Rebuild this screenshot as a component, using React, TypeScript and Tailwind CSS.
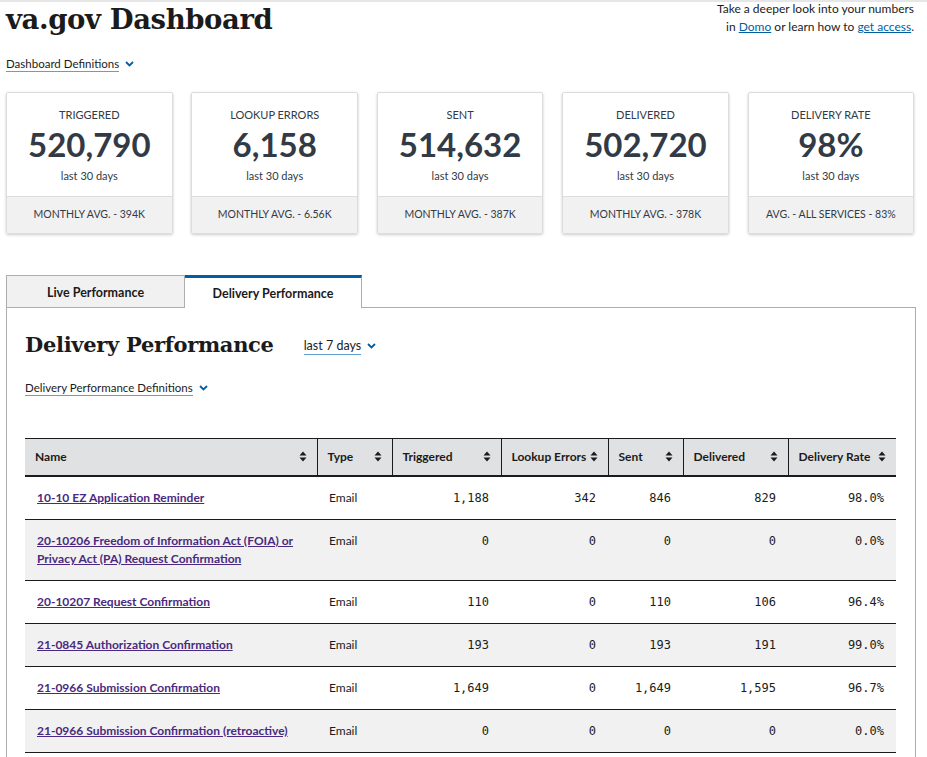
import React from "react";

interface Stat {
  label: string;
  value: string;
  footer: string;
}

interface Row {
  name: string;
  type: string;
  triggered: string;
  lookup: string;
  sent: string;
  delivered: string;
  rate: string;
}

const stats: Stat[] = [
  { label: "Triggered", value: "520,790", footer: "Monthly avg. - 394K" },
  { label: "Lookup errors", value: "6,158", footer: "Monthly avg. - 6.56K" },
  { label: "Sent", value: "514,632", footer: "Monthly avg. - 387K" },
  { label: "Delivered", value: "502,720", footer: "Monthly avg. - 378K" },
  { label: "Delivery rate", value: "98%", footer: "Avg. - all services - 83%" },
];

const rows: Row[] = [
  { name: "10-10 EZ Application Reminder", type: "Email", triggered: "1,188", lookup: "342", sent: "846", delivered: "829", rate: "98.0%" },
  { name: "20-10206 Freedom of Information Act (FOIA) or Privacy Act (PA) Request Confirmation", type: "Email", triggered: "0", lookup: "0", sent: "0", delivered: "0", rate: "0.0%" },
  { name: "20-10207 Request Confirmation", type: "Email", triggered: "110", lookup: "0", sent: "110", delivered: "106", rate: "96.4%" },
  { name: "21-0845 Authorization Confirmation", type: "Email", triggered: "193", lookup: "0", sent: "193", delivered: "191", rate: "99.0%" },
  { name: "21-0966 Submission Confirmation", type: "Email", triggered: "1,649", lookup: "0", sent: "1,649", delivered: "1,595", rate: "96.7%" },
  { name: "21-0966 Submission Confirmation (retroactive)", type: "Email", triggered: "0", lookup: "0", sent: "0", delivered: "0", rate: "0.0%" },
];

const columns = [
  { label: "Name", width: "w-[292px]" },
  { label: "Type", width: "w-[75px]" },
  { label: "Triggered", width: "w-[109px]" },
  { label: "Lookup Errors", width: "w-[107px]" },
  { label: "Sent", width: "w-[75px]" },
  { label: "Delivered", width: "w-[105px]" },
  { label: "Delivery Rate", width: "w-[108px]" },
];

const sans = "font-['Lato',sans-serif]";
const serif = "font-['DejaVu_Serif',serif]";
const mono = "font-['DejaVu_Sans_Mono',monospace]";

function Chevron() {
  return (
    <svg width="9" height="6" viewBox="0 0 9 6" className="ml-[6px] inline-block">
      <path d="M1 1l3.5 3.5L8 1" fill="none" stroke="#005ea2" strokeWidth="1.8" />
    </svg>
  );
}

function SortIcon() {
  return (
    <svg width="8" height="11" viewBox="0 0 8 11" className="shrink-0">
      <path d="M4 0.5L7.5 4.5H0.5Z" fill="#1b1b1b" />
      <path d="M4 10.5L7.5 6.5H0.5Z" fill="#1b1b1b" />
    </svg>
  );
}

export default function App() {
  return (
    <div className={`${sans} min-h-[757px] w-[927px] overflow-hidden border-t-2 border-[#e6e6e6] bg-white text-[#1b1b1b]`}>
      <div className="px-[6px]">
        <div className="flex items-start justify-between">
          <h1 className={`${serif} mt-[-3px] text-[27.5px] font-bold leading-[40px] tracking-[-0.4px]`}>va.gov Dashboard</h1>
          <p className="mr-[7px] mt-[-2px] text-right text-[12px] leading-[18px]">
            Take a deeper look into your numbers
            <br />
            in <span className="text-[#005ea2] underline">Domo</span> or learn how to{" "}
            <span className="text-[#005ea2] underline">get access</span>.
          </p>
        </div>

        <div className="mt-[17px] flex items-center text-[11.5px]">
          <span className="border-b border-[#5fa0d0] leading-[15px]">Dashboard Definitions</span>
          <Chevron />
        </div>

        <div className="mt-[20px] flex gap-[18.8px]">
          {stats.map((s) => (
            <div
              key={s.label}
              className="flex h-[142px] w-[166.6px] flex-col overflow-hidden rounded-[2px] border border-[#dcdcdc] text-[#323a45] shadow-[0_1px_3px_rgba(0,0,0,0.2)]"
            >
              <div className="flex flex-1 flex-col items-center pt-[14px]">
                <div className="text-[11px] uppercase leading-[16px]">{s.label}</div>
                <div className="mt-[1px] text-[33px] font-bold leading-[40px]">{s.value}</div>
                <div className="mt-[4px] text-[11px] leading-[16px]">last 30 days</div>
              </div>
              <div className="flex h-[37px] items-center justify-center border-t border-[#dcdcdc] bg-[#f1f1f1] text-[10.5px] uppercase">
                {s.footer}
              </div>
            </div>
          ))}
        </div>

        <div className="mt-[41px] flex items-end">
          <div className="flex h-[32px] w-[179px] items-center justify-center border border-b-0 border-[#adadad] bg-[#f1f1f1] pt-[3px] text-[12.5px] font-bold">
            Live Performance
          </div>
          <div className="relative z-10 mb-[-1px] flex h-[33px] w-[177px] items-center justify-center border-r border-t-[3px] border-r-[#adadad] border-t-[#005ea2] bg-white pt-[2px] text-[12.5px] font-bold">
            Delivery Performance
          </div>
        </div>

        <div className="mr-[5px] border border-[#adadad] px-[18px] pb-[40px]">
          <div className="mt-[22px] flex items-center">
            <h2 className={`${serif} text-[21px] font-bold leading-[30px] tracking-[-0.3px]`}>Delivery Performance</h2>
            <div className="ml-[30px] mt-[2px] flex items-center text-[12.5px]">
              <span className="border-b border-[#5fa0d0] leading-[16px] text-[#1b1b1b]">last 7 days</span>
              <Chevron />
            </div>
          </div>

          <div className="mt-[20px] flex items-center text-[11.5px]">
            <span className="border-b border-[#5fa0d0] leading-[15px]">Delivery Performance Definitions</span>
            <Chevron />
          </div>

          <table className="mt-[42px] w-[871px] table-fixed border-collapse text-[12px]">
            <thead>
              <tr className="h-[37px] border-b-2 border-t border-[#1b1b1b] bg-[#dfe1e2]">
                {columns.map((c, i) => (
                  <th
                    key={c.label}
                    className={`${c.width} ${i > 0 ? "border-l border-[#1b1b1b]" : ""} px-[10px] text-left font-bold`}
                  >
                    <div className="flex items-center justify-between">
                      <span>{c.label}</span>
                      <SortIcon />
                    </div>
                  </th>
                ))}
              </tr>
            </thead>
            <tbody>
              {rows.map((r, i) => (
                <tr key={r.name} className={`${i % 2 === 1 ? "bg-[#f1f1f1]" : "bg-white"} border-b border-[#1b1b1b] align-top`}>
                  <td className="py-[12px] pl-[12px] pr-[10px] leading-[18px]">
                    <a className="font-bold text-[#4a2a80] underline">{r.name}</a>
                  </td>
                  <td className="py-[12px] pl-[12px] leading-[18px]">{r.type}</td>
                  {[r.triggered, r.lookup, r.sent, r.delivered, r.rate].map((v, j) => (
                    <td key={j} className={`${mono} py-[12px] pr-[12px] text-right text-[12px] leading-[18px]`}>
                      {v}
                    </td>
                  ))}
                </tr>
              ))}
            </tbody>
          </table>
        </div>
      </div>
    </div>
  );
}
